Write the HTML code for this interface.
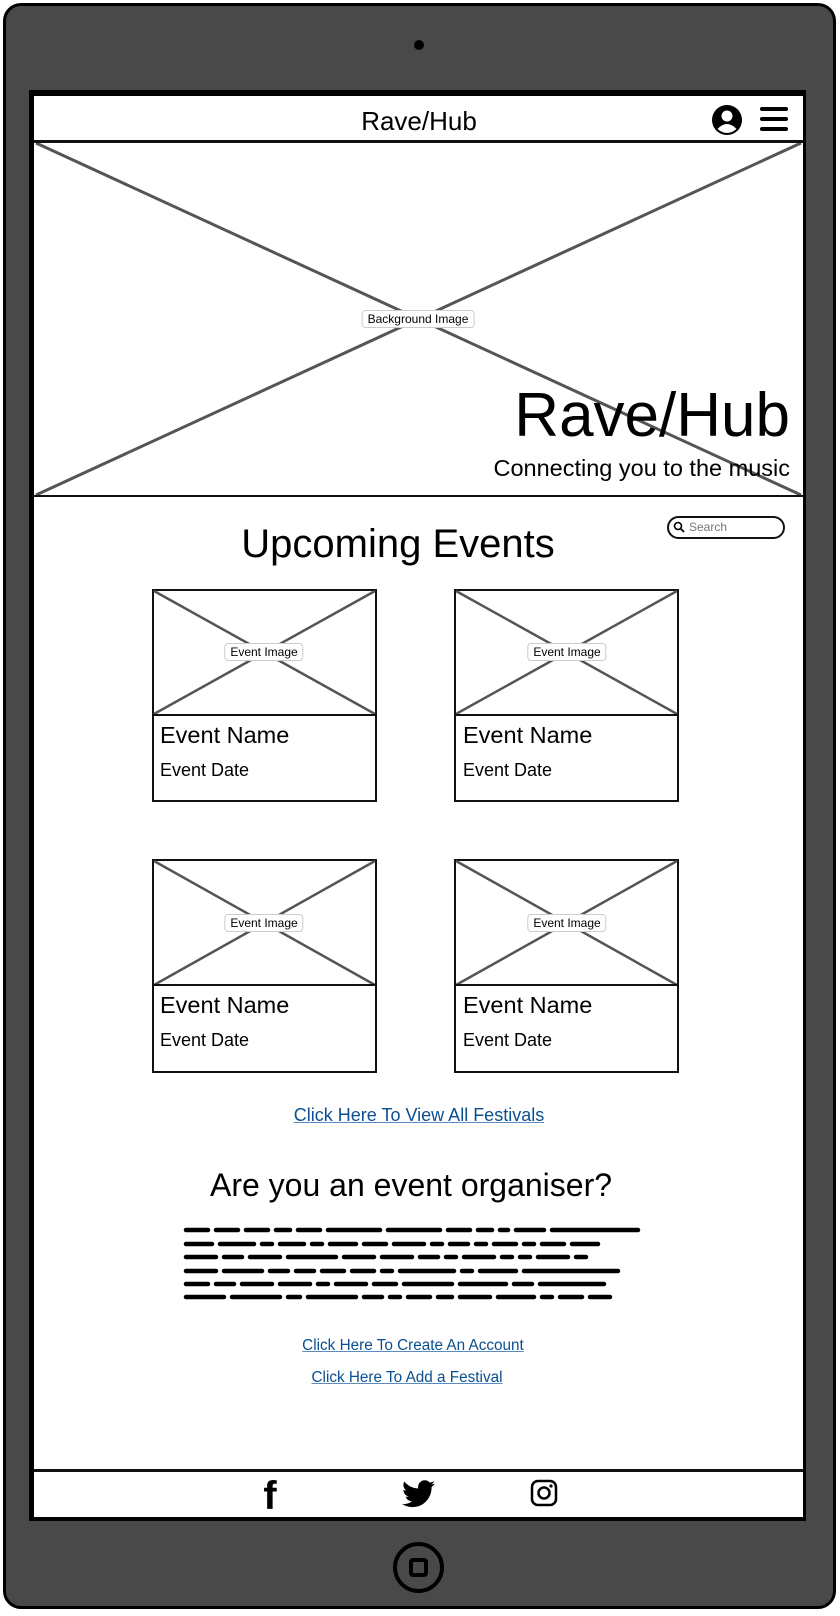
<!DOCTYPE html>
<html><head><meta charset="utf-8"><style>
*{margin:0;padding:0;box-sizing:border-box}
body{width:840px;height:1616px;background:#fff;position:relative;overflow:hidden;font-family:"Liberation Sans",sans-serif;color:#000}
.abs{position:absolute}
.dev{left:3px;top:3px;width:833px;height:1606px;background:#494949;border:3px solid #000;border-radius:18px}
.scr{left:29px;top:90px;width:777px;height:1431px;background:#000}
.wh{left:34px;top:96px;width:769px;height:1421px;background:#fff}
.lbl{background:#fff;border:1px solid #ccc;border-radius:4px;font-size:12px;padding:1px 5px;transform:translate(-50%,-50%);white-space:nowrap}
.card{border:2px solid #111;background:#fff}
.en{font-size:23.5px}
.ed{font-size:18px}
.lnk{color:#0b4f8f;text-decoration:underline;text-decoration-color:#5b8cc0}
.c{transform:translateX(-50%);white-space:nowrap}
</style></head><body>
<div class="abs dev"></div>
<div class="abs" style="left:414px;top:40px;width:10px;height:10px;border-radius:50%;background:#000"></div>
<div class="abs scr"></div>
<div class="abs wh"></div>
<div class="abs" style="left:34px;top:140px;width:769px;height:3px;background:#111"></div>
<div class="abs c" style="left:419px;top:106px;font-size:26px">Rave/Hub</div>
<svg class="abs" style="left:711px;top:104px" width="32" height="32" viewBox="0 0 32 32"><circle cx="16" cy="16" r="15" fill="#000"/><circle cx="16" cy="12" r="5.5" fill="#fff"/><path d="M6.5 25 Q16 15 25.5 25 Q16 33 6.5 25Z" fill="#fff"/></svg>
<svg class="abs" style="left:760px;top:106px" width="28" height="26"><rect x="0" y="1" width="28" height="4" rx="2"/><rect x="0" y="11" width="28" height="4" rx="2"/><rect x="0" y="21" width="28" height="4" rx="2"/></svg>
<svg class="abs" style="left:34px;top:143px" width="769" height="355"><line x1="2" y1="0" x2="767" y2="352" stroke="#555" stroke-width="3"/><line x1="767" y1="0" x2="2" y2="352" stroke="#555" stroke-width="3"/><line x1="0" y1="353" x2="769" y2="353" stroke="#111" stroke-width="2"/></svg>
<div class="abs lbl" style="left:418px;top:319px">Background Image</div>
<div class="abs" style="right:50px;top:380px;font-size:62px">Rave/Hub</div>
<div class="abs" style="right:50px;top:455px;font-size:23.5px">Connecting you to the music</div>
<div class="abs c" style="left:398px;top:522px;font-size:40px">Upcoming Events</div>
<div class="abs" style="left:667px;top:516px;width:118px;height:23px;border:2px solid #111;border-radius:12px;font-size:12px;color:#777;padding:2px 0 0 20px">Search</div>
<svg class="abs" style="left:673px;top:521px" width="12" height="12"><circle cx="5" cy="5" r="3.5" fill="none" stroke="#000" stroke-width="1.6"/><line x1="7.5" y1="7.5" x2="11" y2="11" stroke="#000" stroke-width="1.8"/></svg>

<div class="abs card" style="left:152px;top:589px;width:225px;height:213px"></div>
<div class="abs card" style="left:454px;top:589px;width:225px;height:213px"></div>
<div class="abs card" style="left:152px;top:859px;width:225px;height:214px"></div>
<div class="abs card" style="left:454px;top:859px;width:225px;height:214px"></div>
<svg class="abs" style="left:0;top:0" width="840" height="1616">
<g stroke="#555" stroke-width="2.5" fill="none">
<line x1="154" y1="591" x2="375" y2="714"/><line x1="375" y1="591" x2="154" y2="714"/>
<line x1="456" y1="591" x2="677" y2="714"/><line x1="677" y1="591" x2="456" y2="714"/>
<line x1="154" y1="861" x2="375" y2="985"/><line x1="375" y1="861" x2="154" y2="985"/>
<line x1="456" y1="861" x2="677" y2="985"/><line x1="677" y1="861" x2="456" y2="985"/>
</g>
<g stroke="#111" stroke-width="2">
<line x1="152" y1="715" x2="377" y2="715"/><line x1="454" y1="715" x2="679" y2="715"/>
<line x1="152" y1="985" x2="377" y2="985"/><line x1="454" y1="985" x2="679" y2="985"/>
</g>
<g stroke="#000" stroke-width="4.5" stroke-linecap="round">
<line x1="186" y1="1230" x2="638" y2="1230" stroke-dasharray="22 8 22 8 22 8 14 8 22 8 52 8 52 8 22 8 14 8 8 8 28 8 400"/>
<line x1="186" y1="1244" x2="598" y2="1244" stroke-dasharray="26 8 34 8 10 8 24 8 10 8 26 8 22 8 30 8 10 8 18 8 10 8 22 8 10 8 22 8 400"/>
<line x1="186" y1="1257" x2="606" y2="1257" stroke-dasharray="30 8 18 8 30 8 48 8 30 8 30 8 18 8 10 8 30 8 10 8 10 8 30 8 10 400"/>
<line x1="186" y1="1271" x2="618" y2="1271" stroke-dasharray="30 8 38 8 18 8 18 8 22 8 22 8 10 8 54 8 10 8 36 8 400"/>
<line x1="186" y1="1284" x2="604" y2="1284" stroke-dasharray="22 8 18 8 30 8 30 8 10 8 30 8 22 8 48 8 46 8 18 8 400"/>
<line x1="186" y1="1297" x2="610" y2="1297" stroke-dasharray="38 8 48 8 12 8 48 8 18 8 10 8 22 8 14 8 30 8 36 8 10 8 22 8 400"/>
</g>
</svg>
<div class="abs lbl" style="left:264px;top:652px">Event Image</div>
<div class="abs lbl" style="left:567px;top:652px">Event Image</div>
<div class="abs lbl" style="left:264px;top:923px">Event Image</div>
<div class="abs lbl" style="left:567px;top:923px">Event Image</div>
<div class="abs en" style="left:160px;top:722px">Event Name</div>
<div class="abs ed" style="left:160px;top:760px">Event Date</div>
<div class="abs en" style="left:463px;top:722px">Event Name</div>
<div class="abs ed" style="left:463px;top:760px">Event Date</div>
<div class="abs en" style="left:160px;top:992px">Event Name</div>
<div class="abs ed" style="left:160px;top:1030px">Event Date</div>
<div class="abs en" style="left:463px;top:992px">Event Name</div>
<div class="abs ed" style="left:463px;top:1030px">Event Date</div>

<div class="abs c lnk" style="left:419px;top:1105px;font-size:18px">Click Here To View All Festivals</div>
<div class="abs c" style="left:411px;top:1167px;font-size:32px">Are you an event organiser?</div>
<div class="abs c lnk" style="left:413px;top:1337px;font-size:15.3px">Click Here To Create An Account</div>
<div class="abs c lnk" style="left:407px;top:1369px;font-size:15.3px">Click Here To Add a Festival</div>
<div class="abs" style="left:34px;top:1469px;width:769px;height:3px;background:#111"></div>
<div class="abs c" style="left:270px;top:1474px;font-size:40px;font-weight:bold">f</div>
<svg class="abs" style="left:402px;top:1480px" width="33" height="28" viewBox="0 0 24 20"><path d="M24 2.4c-.9.4-1.8.6-2.8.8 1-.6 1.8-1.6 2.2-2.7-1 .6-2 1-3.1 1.2C19.3.6 18 0 16.6 0c-2.7 0-4.9 2.2-4.9 4.9 0 .4 0 .8.1 1.1C7.7 5.8 4.1 3.9 1.7.9c-.4.7-.7 1.6-.7 2.5 0 1.7.9 3.2 2.2 4.1-.8 0-1.6-.2-2.2-.6v.1c0 2.4 1.7 4.4 3.9 4.8-.4.1-.8.2-1.3.2-.3 0-.6 0-.9-.1.6 2 2.4 3.4 4.6 3.4-1.7 1.3-3.8 2.1-6.1 2.1-.4 0-.8 0-1.2-.1 2.2 1.4 4.8 2.2 7.5 2.2 9.1 0 14-7.5 14-14v-.6c1-.7 1.8-1.6 2.5-2.5z"/></svg>
<svg class="abs" style="left:530px;top:1479px" width="28" height="28" viewBox="0 0 28 28"><rect x="2" y="2" width="24" height="24" rx="6" fill="none" stroke="#000" stroke-width="2.5"/><circle cx="14" cy="14" r="5.5" fill="none" stroke="#000" stroke-width="2.5"/><circle cx="21" cy="7" r="1.6"/></svg>
<div class="abs" style="left:393px;top:1542px;width:51px;height:51px;border:4px solid #000;border-radius:50%"></div>
<div class="abs" style="left:409px;top:1558px;width:19px;height:19px;border:4px solid #000;border-radius:4px"></div>
</body></html>
